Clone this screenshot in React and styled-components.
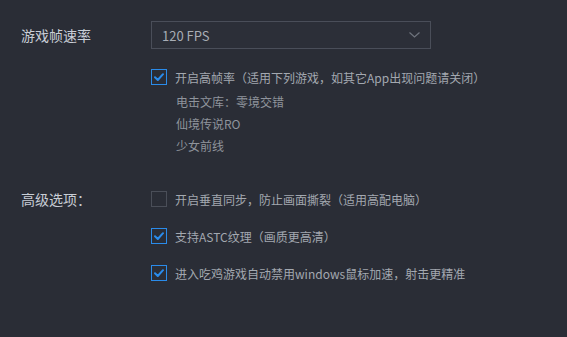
import React from "react";
import styled, { createGlobalStyle } from "styled-components";

const Global = createGlobalStyle`
  html, body { margin: 0; padding: 0; background: #2a2d36; }
  body { font-family: "Noto Sans CJK SC", "Noto Sans", sans-serif; }
`;

const Page = styled.div`
  width: 567px;
  height: 337px;
  box-sizing: border-box;
  padding: 21px 0 0 21px;
  background: #2a2d36;
  display: flex;
  flex-direction: column;
  gap: 31px;
`;

const Section = styled.div`
  display: grid;
  grid-template-columns: 130px 1fr;
  align-items: start;
`;

const Label = styled.div`
  font-size: 14px;
  color: #c9ced6;
  height: ${(p) => p.$h}px;
  line-height: ${(p) => p.$h}px;
  white-space: nowrap;
`;

const Content = styled.div`
  display: flex;
  flex-direction: column;
  gap: ${(p) => p.$gap || 0}px;
`;

const Select = styled.div`
  width: 280px;
  height: 28px;
  box-sizing: border-box;
  border: 1px solid #4a4e59;
  background: #2c2f38;
  display: flex;
  align-items: center;
  justify-content: space-between;
  padding: 0 10px 0 10px;
  font-size: 13px;
  color: #a8adb5;
  margin-bottom: 17px;
`;

const Row = styled.label`
  display: flex;
  align-items: center;
  gap: 8px;
  height: 22px;
  font-size: 12px;
  color: #a3a8b0;
  white-space: nowrap;
`;

const Box = styled.span`
  width: 16px;
  height: 16px;
  box-sizing: border-box;
  border: 1px solid ${(p) => (p.$on ? "#2a8bea" : "#4a4e58")};
  display: flex;
  align-items: center;
  justify-content: center;
  flex-shrink: 0;
`;

const SubList = styled.div`
  display: flex;
  flex-direction: column;
  padding-left: 25px;
  margin-top: 3px;
`;

const SubItem = styled.div`
  font-size: 12px;
  height: 22px;
  line-height: 22px;
  color: #8f949c;
`;

const Check = ({ on }) => (
  <Box $on={on}>
    {on && (
      <svg width="10" height="8" viewBox="0 0 10 8">
        <path d="M1 4.2 L3.8 7 L9 1.2" fill="none" stroke="#2a8bea" strokeWidth="2" strokeLinecap="round" strokeLinejoin="round" />
      </svg>
    )}
  </Box>
);

const Option = ({ on, children }) => (
  <Row>
    <Check on={on} />
    <span>{children}</span>
  </Row>
);

export default function App() {
  return (
    <>
      <Global />
      <Page>
        <Section>
          <Label $h={28}>游戏帧速率</Label>
          <Content>
            <Select>
              <span>120 FPS</span>
              <svg width="11" height="6" viewBox="0 0 11 6">
                <path d="M0.5 0.5 L5.5 5 L10.5 0.5" fill="none" stroke="#6f747d" strokeWidth="1.2" />
              </svg>
            </Select>
            <Option on>开启高帧率（适用下列游戏，如其它App出现问题请关闭）</Option>
            <SubList>
              <SubItem>电击文库：零境交错</SubItem>
              <SubItem>仙境传说RO</SubItem>
              <SubItem>少女前线</SubItem>
            </SubList>
          </Content>
        </Section>
        <Section>
          <Label $h={22}>高级选项：</Label>
          <Content $gap={15}>
            <Option>开启垂直同步，防止画面撕裂（适用高配电脑）</Option>
            <Option on>支持ASTC纹理（画质更高清）</Option>
            <Option on>进入吃鸡游戏自动禁用windows鼠标加速，射击更精准</Option>
          </Content>
        </Section>
      </Page>
    </>
  );
}
